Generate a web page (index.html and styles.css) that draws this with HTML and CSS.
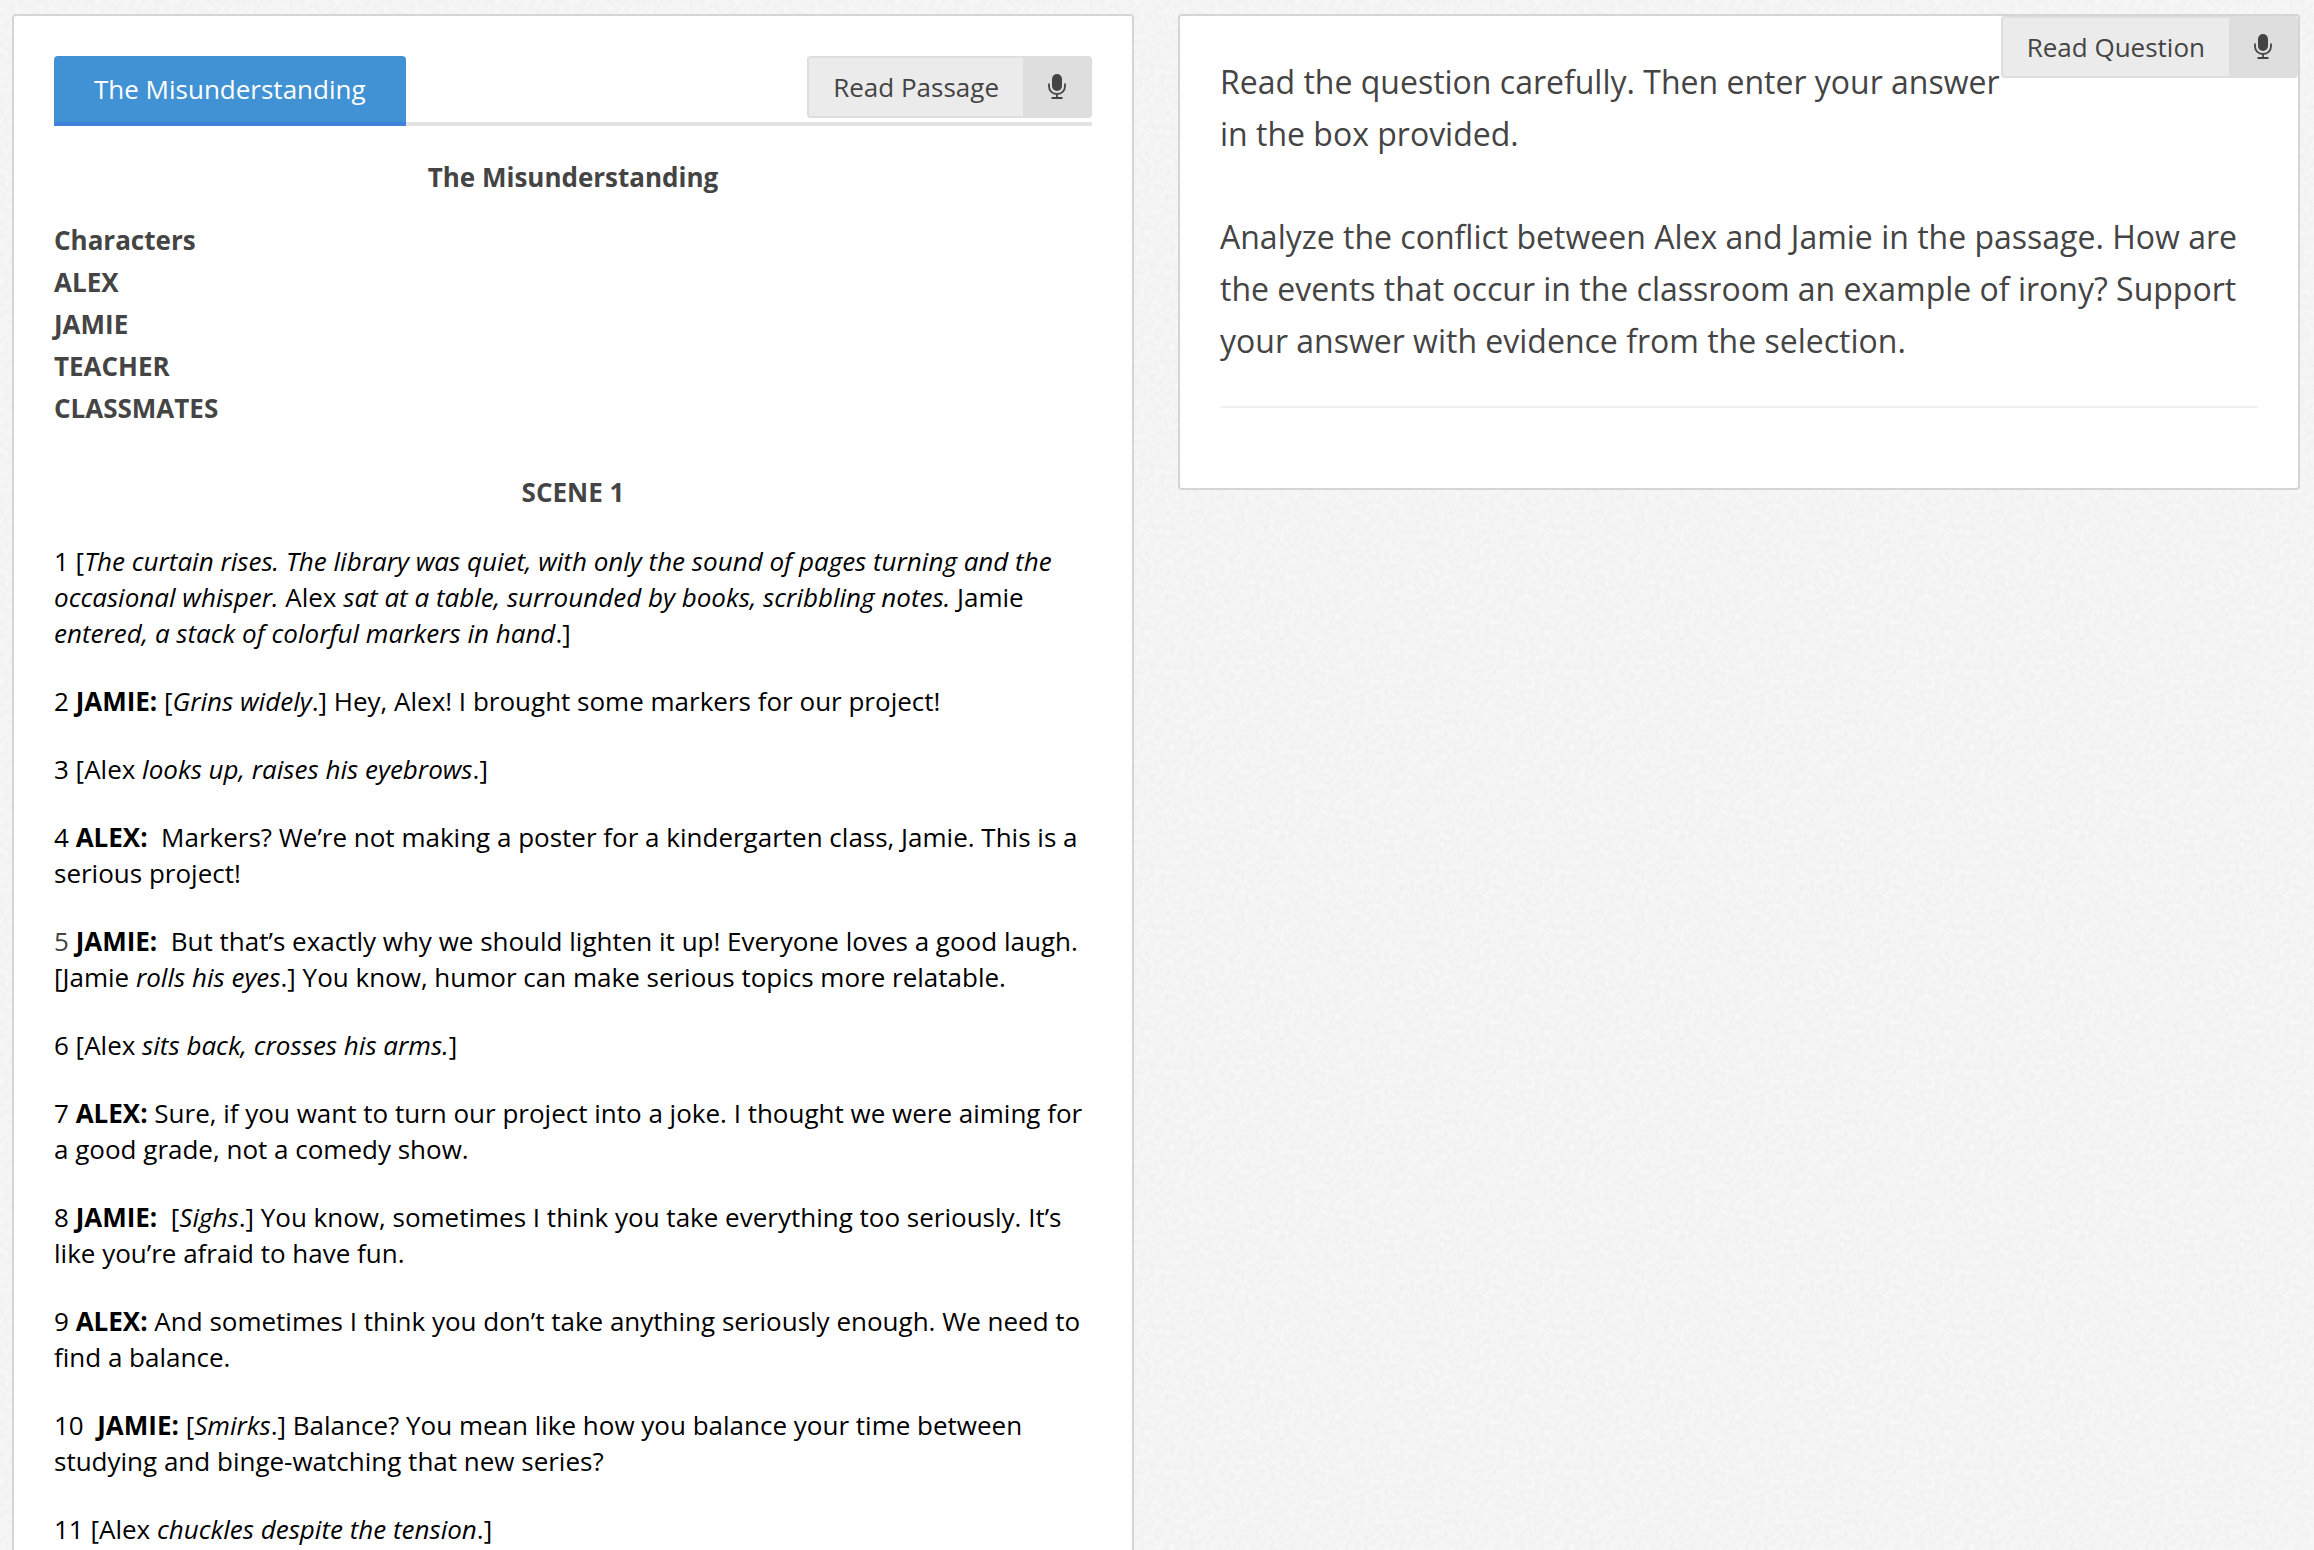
FILE: index.html
```html
<!DOCTYPE html>
<html lang="en">
<head>
	<meta charset="utf-8">
	<title>The Misunderstanding</title>
	<meta name="viewport" content="width=device-width, initial-scale=1.0">
	<link rel="stylesheet" href="styles.css">
</head>
<body>
	<main class="container">
		<section class="panel passage">
			<div class="tabs">
				<button class="tab" type="button">The Misunderstanding</button>
				<button class="read" type="button">
					<span class="read-label">Read Passage</span>
					<span class="read-icon">
						<svg width="18" height="25" viewBox="0 0 18 25" aria-hidden="true">
							<rect x="4" y="0" width="10" height="17" rx="5" fill="#444"/>
							<path d="M1 9.500v3a8 7.500 0 0 0 16 0v-3M9 20v4M3.500 24h11" fill="none" stroke="#444" stroke-width="1.800"/>
						</svg>
					</span>
				</button>
			</div>

			<h1>The Misunderstanding</h1>
			<h2>Characters</h2>
			<ul class="characters">
				<li>ALEX</li>
				<li>JAMIE</li>
				<li>TEACHER</li>
				<li>CLASSMATES</li>
			</ul>
			<h2 class="scene">SCENE 1</h2>

			<div class="script">
				<p>1 [<i>The curtain rises. The library was quiet, with only the sound of pages turning and the occasional whisper.</i> Alex <i>sat at a table, surrounded by books, scribbling notes.</i> Jamie <i>entered, a stack of colorful markers in hand</i>.]</p>
				<p>2 <b>JAMIE:</b> [<i>Grins widely</i>.] Hey, Alex! I brought some markers for our project!</p>
				<p>3 [Alex <i>looks up, raises his eyebrows</i>.]</p>
				<p>4 <b>ALEX:</b>&nbsp; Markers? We’re not making a poster for a kindergarten class, Jamie. This is a serious project!</p>
				<p><span class="num">5</span> <b>JAMIE:</b>&nbsp; But that’s exactly why we should lighten it up! Everyone loves a good laugh. [Jamie <i>rolls his eyes</i>.] You know, humor can make serious topics more relatable.</p>
				<p>6 [Alex <i>sits back, crosses his arms.</i>]</p>
				<p>7 <b>ALEX:</b> Sure, if you want to turn our project into a joke. I thought we were aiming for a good grade, not a comedy show.</p>
				<p>8 <b>JAMIE:</b>&nbsp; [<i>Sighs</i>.] You know, sometimes I think you take everything too seriously. It’s like you’re afraid to have fun.</p>
				<p>9 <b>ALEX:</b> And sometimes I think you don’t take anything seriously enough. We need to find a balance.</p>
				<p>10&nbsp; <b>JAMIE:</b> [<i>Smirks</i>.] Balance? You mean like how you balance your time between studying and binge-watching that new series?</p>
				<p>11 [Alex <i>chuckles despite the tension</i>.]</p>
			</div>
		</section>

		<section class="panel question">
			<button class="read" type="button">
				<span class="read-label">Read Question</span>
				<span class="read-icon">
					<svg width="18" height="25" viewBox="0 0 18 25" aria-hidden="true">
						<rect x="4" y="0" width="10" height="17" rx="5" fill="#444"/>
						<path d="M1 9.500v3a8 7.500 0 0 0 16 0v-3M9 20v4M3.500 24h11" fill="none" stroke="#444" stroke-width="1.800"/>
					</svg>
				</span>
			</button>
			<p>Read the question carefully. Then enter your answer in the box provided.</p>
			<p>Analyze the conflict between Alex and Jamie in the passage. How are the events that occur in the classroom an example of irony? Support your answer with evidence from the selection.</p>
			<hr>
		</section>
	</main>
</body>
</html>
```
FILE: styles.css
```css
*{
	box-sizing: border-box;
}
body{
	margin: 0;
	font-family: "Open Sans", sans-serif;
	font-size: 26px;
	line-height: 42px;
	color: #444;
	background-color: #f4f4f4;
	/* paper grain */
	background-image: url("data:image/svg+xml,%3Csvg xmlns='http://www.w3.org/2000/svg' width='400' height='400'%3E%3Cfilter id='n' x='0' y='0' width='100%25' height='100%25' color-interpolation-filters='sRGB'%3E%3CfeTurbulence type='fractalNoise' baseFrequency='.2' numOctaves='2' stitchTiles='stitch'/%3E%3CfeColorMatrix values='.05 0 0 0 .932 .05 0 0 0 .932 .05 0 0 0 .932 0 0 0 0 1'/%3E%3C/filter%3E%3Crect width='400' height='400' filter='url(%23n)'/%3E%3C/svg%3E");
}
h1, h2, p, ul{
	margin: 0;
	padding: 0;
	font-size: 26px;
}
.container{
	display: grid;
	grid-template-columns: 1fr 1fr;
	align-items: start;
	gap: 44px;
	padding: 14px 14px 14px 12px;
}
.panel{
	background: #fff;
	border: 2px solid #d5d5d5;
	border-radius: 4px;
	padding: 40px;
}

/* tab row */
.tabs{
	display: flex;
	justify-content: space-between;
	align-items: flex-start;
	height: 70px;
	border-bottom: 4px solid #e2e2e2;
	margin-bottom: 30px;
}
button{
	font: inherit;
	color: inherit;
	cursor: pointer;
}
.tab{
	height: 70px;
	padding: 0 40px;
	border: 0;
	border-bottom: 4px solid #4080dc;
	border-radius: 4px 4px 0 0;
	background: #4192d4;
	color: #fff;
}
.read{
	display: flex;
	height: 62px;
	padding: 0;
	border: 2px solid #dedede;
	border-radius: 4px;
	background: #ebebeb;
	line-height: 58px;
}
.read-label{
	padding: 0 24px;
}
.read-icon{
	display: flex;
	align-items: center;
	justify-content: center;
	width: 67px;
	padding-bottom: 2px;
	background: #dedede;
}

/* passage */
h1{
	text-align: center;
	margin-bottom: 21px;
}
.characters{
	list-style: none;
	font-weight: bold;
}
.scene{
	text-align: center;
	margin: 42px 0 30px;
}
.script{
	color: #000;
	line-height: 36px;
}
.script p{
	margin-bottom: 32px;
}
.num{
	color: #444;
}

/* question */
.question .read{
	float: right;
	margin: -40px -40px 0 0;
}
.question p{
	font-size: 32px;
	line-height: 52px;
	margin-bottom: 51px;
}
.question hr{
	margin: -12px 0 40px;
	border: 0;
	border-top: 2px solid #f0f0f0;
}
```
